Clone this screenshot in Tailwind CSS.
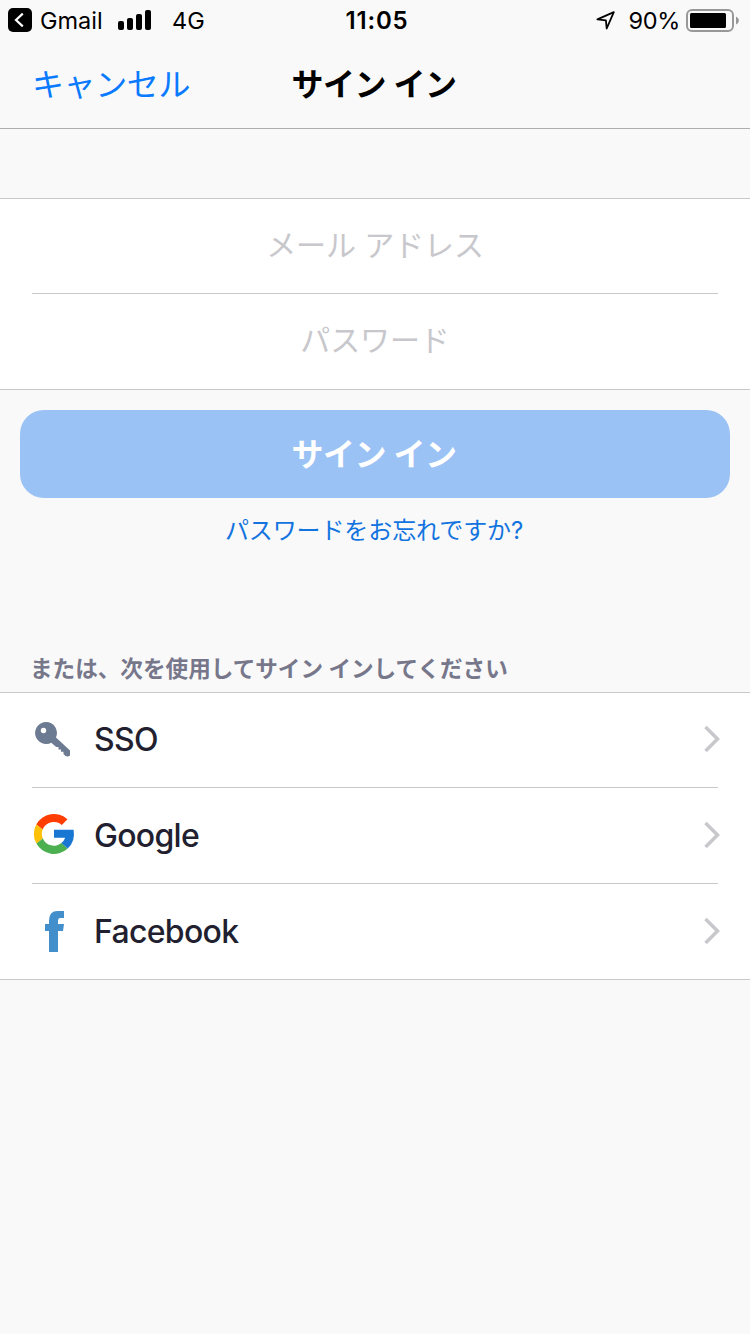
<!DOCTYPE html>
<html lang="ja">
<head>
<meta charset="utf-8">
<title>サイン イン</title>
<script src="https://cdn.jsdelivr.net/npm/@tailwindcss/browser@4"></script>
</head>
<body class="w-[750px] h-[1334px] overflow-hidden bg-[#f9f9f9] font-['Inter','Noto_Sans_CJK_JP',sans-serif]">
<header class="h-[129px] border-b border-[#aeaeb0] text-black">
  <div class="grid grid-cols-[1fr_auto_1fr] h-[41px] items-center pl-2 pr-[11px] text-[23.5px] leading-[42px]">
    <div class="flex items-center">
      <svg class="w-6 h-6 mb-0.5" viewBox="0 0 24 24"><rect width="24" height="24" rx="5"/><path d="M14.8 5.6 8 12l6.8 6.4" fill="none" stroke="#fff" stroke-width="2.2"/></svg>
      <span class="ml-2 w-[78px]">Gmail</span>
      <svg class="w-[33px] h-5 mb-0.5" viewBox="0 0 33 20"><rect y="11" width="6" height="9" rx="2"/><rect x="9" y="8" width="6" height="12" rx="2"/><rect x="18" y="4" width="6" height="16" rx="2"/><rect x="27" width="6" height="20" rx="2"/></svg>
      <span class="ml-[21px]">4G</span>
    </div>
    <span class="font-semibold text-[24px] tracking-[0.8px] pl-[7px]">11:05</span>
    <div class="flex items-center justify-end">
      <svg class="w-5 h-5 mr-3 mb-0.5" viewBox="0 0 20 20"><path d="M1.4 9.3 17.8 2.2 10.7 18.5 9.9 10.3Z" fill="none" stroke="#000" stroke-width="1.8" stroke-linejoin="round"/></svg>
      <span class="tracking-[-0.3px]">90%</span>
      <svg class="w-[53px] h-[23px] ml-1.5 mb-0.5" viewBox="0 0 53 23"><rect x="1" y="1" width="46" height="21" rx="5" fill="none" stroke="#98989a" stroke-width="2"/><rect x="4" y="4" width="36" height="15" rx="1.5"/><path d="M50 7.5q3 1.5 3 4t-3 4z" fill="#98989a"/></svg>
    </div>
  </div>
  <div class="grid grid-cols-[1fr_auto_1fr] h-[87px] items-center px-8 text-[32px] leading-[88px]">
    <a class="text-[#0a7aff] tracking-[-0.4px]">キャンセル</a>
    <h1 class="font-bold tracking-[-0.4px] pr-0.5">サイン イン</h1>
  </div>
</header>
<main>
  <section class="mt-[69px] bg-white border-y border-[#c8c8cc] px-8 text-center text-[30px] tracking-[-0.1px] text-[#c7c7cc]">
    <div class="h-[95px] border-b border-[#c8c8cc] leading-[92px]">メール アドレス</div>
    <div class="h-[95px] leading-[92px]">パスワード</div>
  </section>
  <section class="px-5 pt-5 text-center">
    <button class="block w-full h-[88px] rounded-[24px] bg-[#9bc2f4] pr-0.5 text-white text-[32px] leading-[90px] font-bold tracking-[-0.4px]">サイン イン</button>
    <a class="block mt-[13px] h-10 pr-0.5 leading-10 text-[24px] tracking-[-0.1px] text-[#1374e0]">パスワードをお忘れですか?</a>
  </section>
  <h2 class="mt-[98px] h-10 pl-[30px] leading-10 text-[22.6px] font-bold text-[#77778b]">または、次を使用してサイン インしてください</h2>
  <section class="mt-[3px] bg-white border-y border-[#c8c8cc] px-8 text-[32px] tracking-[-0.7px] text-[#221f30] font-medium">
    <div class="flex items-center h-[95px] border-b border-[#c8c8cc]">
      <svg class="w-11 h-11 mb-0.5" viewBox="0 0 44 44"><path fill="#6c7a92" fill-rule="evenodd" d="M14 5a11 11 0 0 1 10 15.500L38 33.500V38.500Q36 40 33.500 39L31.500 37V34.800H29V32.400H26.500V30H24.200L19.300 25.700A11 11 0 1 1 14 5ZM11.500 10.800a2.700 2.700 0 1 0 0 5.400a2.700 2.700 0 1 0 0-5.400Z"/></svg>
      <span class="ml-[18px] flex-1">SSO</span>
      <svg class="w-[18px] h-7 -mr-[3px] mb-0.5" viewBox="0 0 18 28"><path d="M2.500 2 14.500 14 2.500 26" fill="none" stroke="#c7c7cc" stroke-width="3.500"/></svg>
    </div>
    <div class="flex items-center h-24 border-b border-[#c8c8cc]">
      <svg class="w-11 h-11 mb-1" viewBox="0 0 44 44"><path fill="#ff3d00" d="M4.3 12.6A20 20 0 0 1 35.5 7.3L29.8 13A12 12 0 0 0 10.7 17.4Z"/><path fill="#ffc107" d="M4.3 12.6A20 20 0 0 0 4.4 31.6L10.8 26.6A12 12 0 0 1 10.7 17.4Z"/><path fill="#4caf50" d="M4.4 31.6A20 20 0 0 0 35.7 36.4L29.3 31A12 12 0 0 1 10.8 26.6Z"/><path fill="#1976d2" d="M22 17.8H41.6Q43.6 29.5 35.7 36.4L29.3 31Q32 29.2 33.2 25.8H22Z"/></svg>
      <span class="ml-[18px] flex-1">Google</span>
      <svg class="w-[18px] h-7 -mr-[3px] mb-0.5" viewBox="0 0 18 28"><path d="M2.500 2 14.500 14 2.500 26" fill="none" stroke="#c7c7cc" stroke-width="3.500"/></svg>
    </div>
    <div class="flex items-center h-[95px]">
      <svg class="w-11 h-11 mb-0.5" viewBox="0 0 44 44"><path fill="#428fcb" d="M17 43V22H13V15H17V11.5Q17 2 25.5 2H32V9H28Q26 9 26 11.5V15H32L31 22H26V43Z"/></svg>
      <span class="ml-[18px] flex-1">Facebook</span>
      <svg class="w-[18px] h-7 -mr-[3px] mb-0.5" viewBox="0 0 18 28"><path d="M2.500 2 14.500 14 2.500 26" fill="none" stroke="#c7c7cc" stroke-width="3.500"/></svg>
    </div>
  </section>
</main>
</body>
</html>
